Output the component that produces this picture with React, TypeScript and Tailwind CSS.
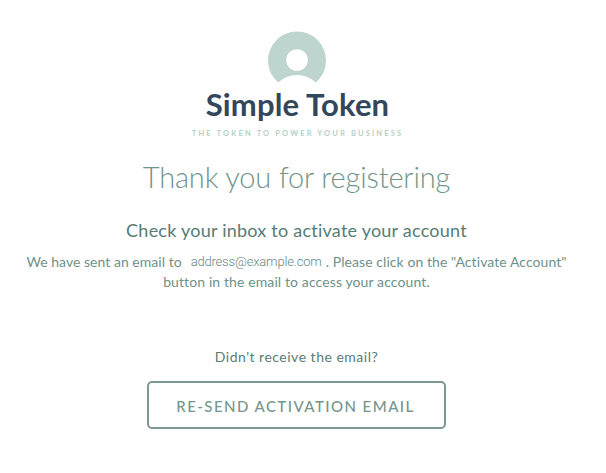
function TokenMark() {
  return (
    <svg className="block h-[53px] w-[60px]" viewBox="-0.5 0 60 53" aria-hidden="true">
      <path
        fill="#bdd5ce"
        fillRule="evenodd"
        d="M10.6 52.5A29 29 0 1 1 48.4 52.5A27.8 27.8 0 0 0 10.6 52.5ZM29.5 19.2a10.8 10.8 0 1 0 0 21.6a10.8 10.8 0 0 0 0-21.6Z"
      />
    </svg>
  );
}

function Logo() {
  return (
    <header className="flex flex-col items-center pl-0.5 whitespace-nowrap">
      <TokenMark />
      <h1 className="mt-[5px] h-8 text-[31px] leading-8 font-bold tracking-[0.15px] text-[#34465a]">Simple Token</h1>
      <p className="mt-2 h-3 text-[7.5px] leading-3 font-bold tracking-[2.15px] text-[#b3d0c8]">
        THE TOKEN TO POWER YOUR BUSINESS
      </p>
    </header>
  );
}

export default function App() {
  return (
    <div className="h-[473px] w-[606px] overflow-hidden bg-white font-['Lato',sans-serif]">
      <main className="flex w-[593px] flex-col items-center pt-[30px] whitespace-nowrap">
        <Logo />
        <h2 className="mt-[17px] h-10 text-[29px] leading-10 font-light tracking-[-0.15px] text-[#6f958b]">
          Thank you for registering
        </h2>
        <h3 className="mt-[21px] h-6 text-lg leading-6 font-normal tracking-[0.23px] text-[#577c76]">
          Check your inbox to activate your account
        </h3>
        <div className="mt-2.5 flex flex-col items-center text-sm leading-5 tracking-[0.11px] text-[#6e918a]">
          <p className="flex whitespace-pre">
            <span className="tracking-[0.03px]">We have sent an email to</span>
            <span className="ml-[9px] font-['Roboto','Liberation_Sans',sans-serif] text-[13px] font-light tracking-[-0.18px] text-[#648981]">address@example.com</span>
            <span className="ml-1 tracking-[0.07px]">. Please click on the "Activate Account"</span>
          </p>
          <p>button in the email to access your account.</p>
        </div>
        <p className="mt-[55px] h-5 text-sm leading-5 tracking-[0.5px] text-[#577c76]">
          Didn't receive the email?
        </p>
        <button className="mt-[14px] h-12 w-[299px] rounded-[5px] border-2 border-[#7b9893] pt-0.5 pr-0.5 text-[15px] font-medium tracking-[1.45px] text-[#76958d]">
          RE-SEND ACTIVATION EMAIL
        </button>
      </main>
    </div>
  );
}
